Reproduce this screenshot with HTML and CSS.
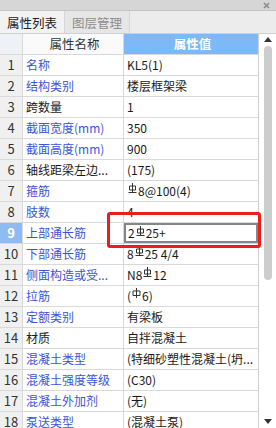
FILE: index.html
```html
<!DOCTYPE html>
<html lang="zh-CN">
<head>
<meta charset="UTF-8" />
<title>属性列表</title>
<link rel="stylesheet" href="styles.css">
</head>
<body>
  <div class="panel">
    <div class="titlebar">
      <svg class="close" width="7" height="7" viewBox="0 0 7 7"><path d="M1 1L6 6M6 1L1 6" stroke="#8a8a8a" stroke-width="1.6"/></svg>
    </div>
    <div class="tabs">
      <div class="tab active">属性列表</div>
      <div class="tab">图层管理</div>
    </div>
    <div class="body">
      <div class="grid">
        <div class="row head">
          <div class="num"></div>
          <div class="name">属性名称</div>
          <div class="value">属性值</div>
        </div>
        <div class="row"><div class="num">1</div><div class="name blue">名称</div><div class="value">KL5(1)</div></div>
        <div class="row"><div class="num">2</div><div class="name blue">结构类别</div><div class="value">楼层框架梁</div></div>
        <div class="row"><div class="num">3</div><div class="name">跨数量</div><div class="value">1</div></div>
        <div class="row"><div class="num">4</div><div class="name blue">截面宽度(mm)</div><div class="value">350</div></div>
        <div class="row"><div class="num">5</div><div class="name blue">截面高度(mm)</div><div class="value">900</div></div>
        <div class="row"><div class="num">6</div><div class="name">轴线距梁左边...</div><div class="value">(175)</div></div>
        <div class="row"><div class="num">7</div><div class="name blue">箍筋</div><div class="value"><svg class="bar" viewBox="0 0 9 10"><path d="M4.5 0V10M1.5 3H7.5V7H1.5ZM0.5 9.5H8.5" fill="none" stroke="#333" stroke-width="1"/></svg>8@100(4)</div></div>
        <div class="row"><div class="num">8</div><div class="name blue">肢数</div><div class="value">4</div></div>
        <div class="row"><div class="num sel">9</div><div class="name blue">上部通长筋</div><div class="value"><span class="edit">2<svg class="bar" viewBox="0 0 9 10"><path d="M4.5 0V10M1.5 3H7.5V7H1.5ZM0.5 9.5H8.5" fill="none" stroke="#333" stroke-width="1"/></svg>25+</span></div></div>
        <div class="row"><div class="num">10</div><div class="name blue">下部通长筋</div><div class="value">8<svg class="bar" viewBox="0 0 9 10"><path d="M4.5 0V10M1.5 3H7.5V7H1.5ZM0.5 9.5H8.5" fill="none" stroke="#333" stroke-width="1"/></svg>25 4/4</div></div>
        <div class="row"><div class="num">11</div><div class="name blue">侧面构造或受...</div><div class="value">N8<svg class="bar" viewBox="0 0 9 10"><path d="M4.5 0V10M1.5 3H7.5V7H1.5ZM0.5 9.5H8.5" fill="none" stroke="#333" stroke-width="1"/></svg>12</div></div>
        <div class="row"><div class="num">12</div><div class="name blue">拉筋</div><div class="value">(<svg class="bar" viewBox="0 0 9 10"><path d="M4.5 0V10M1 3H8V7.5H1Z" fill="none" stroke="#333" stroke-width="1"/></svg>6)</div></div>
        <div class="row"><div class="num">13</div><div class="name blue">定额类别</div><div class="value">有梁板</div></div>
        <div class="row"><div class="num">14</div><div class="name">材质</div><div class="value">自拌混凝土</div></div>
        <div class="row"><div class="num">15</div><div class="name blue">混凝土类型</div><div class="value">(特细砂塑性混凝土(坍...</div></div>
        <div class="row"><div class="num">16</div><div class="name blue">混凝土强度等级</div><div class="value">(C30)</div></div>
        <div class="row"><div class="num">17</div><div class="name blue">混凝土外加剂</div><div class="value">(无)</div></div>
        <div class="row"><div class="num">18</div><div class="name blue">泵送类型</div><div class="value">(混凝土泵)</div></div>
      </div>
      <div class="scrollbar">
        <span class="arrow up"></span>
        <span class="thumb"></span>
        <span class="arrow down"></span>
      </div>
    </div>
    <div class="highlight"></div>
  </div>
</body>
</html>
```

FILE: styles.css
```css
* {
  box-sizing: border-box;
}

body {
  margin: 0;
  background: #ffffff;
  font-family: "Noto Sans CJK SC", "Noto Sans", sans-serif;
  font-size: 12px;
  color: #1a1a1a;
}

.panel {
  position: relative;
  width: 276px;
  height: 428px;
  overflow: hidden;
  display: flex;
  flex-direction: column;
}

.titlebar {
  height: 11px;
  background: #d6d6d6;
  border-bottom: 1px solid #c4c4c4;
  display: flex;
  justify-content: flex-end;
  align-items: center;
  padding-right: 6px;
}

.tabs {
  height: 23px;
  display: flex;
  background: #ececec;
  border-bottom: 1px solid #d0d0d0;
}

.tab {
  width: 65px;
  display: flex;
  align-items: center;
  justify-content: center;
  font-size: 12.5px;
  color: #8c8c8c;
  border-right: 1px solid #d6d6d6;
  background: #e6e6e6;
}

.tab.active {
  color: #222222;
  background: #f2f2f2;
}

.body {
  flex: 1;
  display: flex;
  min-height: 0;
}

.grid {
  width: 259px;
  border-right: 1px solid #d0d0d0;
}

.row {
  display: flex;
  height: 21px;
  border-bottom: 1px solid #d9d9d9;
}

.row > div {
  height: 20px;
  line-height: 20px;
  white-space: nowrap;
  overflow: hidden;
  font-size: 12px;
}

.num {
  width: 23px;
  text-align: center;
  background: #f0f0f0;
  border-right: 1px solid #d9d9d9;
  color: #333333;
  font-size: 13px !important;
}

.num.sel {
  background: #8cbcf2;
  color: #ffffff;
  font-weight: bold;
}

.name {
  width: 101px;
  padding-left: 3px;
  border-right: 1px solid #d9d9d9;
}

.name.blue {
  color: #3a55d8;
}

.value {
  flex: 1;
  padding-left: 3px;
}

.head .num {
  background: #eef1f5;
}

.head .name {
  text-align: center;
  background: #fafafa;
  color: #333333;
  font-size: 12.5px;
}

.head .value {
  text-align: center;
  background: #7db9f6;
  color: #ffffff;
  font-weight: bold;
  font-size: 12.5px;
}

.bar {
  width: 9px;
  height: 10px;
  margin: 0 1px;
  vertical-align: 3px;
}

.edit {
  display: flex;
  align-items: center;
  width: 134px;
  height: 20px;
  margin-left: -3px;
  padding-left: 2px;
  border: 2px solid #858585;
}

.edit .bar {
  margin-top: -5px;
}

.scrollbar {
  flex: 1;
  display: flex;
  flex-direction: column;
  align-items: center;
  background: #ffffff;
  padding: 3px 0 4px;
}

.arrow {
  width: 0;
  height: 0;
  border-left: 4px solid transparent;
  border-right: 4px solid transparent;
}

.arrow.up {
  border-bottom: 5px solid #333333;
}

.arrow.down {
  margin-top: auto;
  border-top: 5px solid #333333;
}

.thumb {
  width: 8px;
  height: 234px;
  margin-top: 4px;
  background: #cdcdcd;
  border-radius: 4px;
}

.highlight {
  position: absolute;
  left: 107px;
  top: 212px;
  width: 154px;
  height: 36px;
  border: 3px solid #ee1c1c;
  border-radius: 3px;
}
```
